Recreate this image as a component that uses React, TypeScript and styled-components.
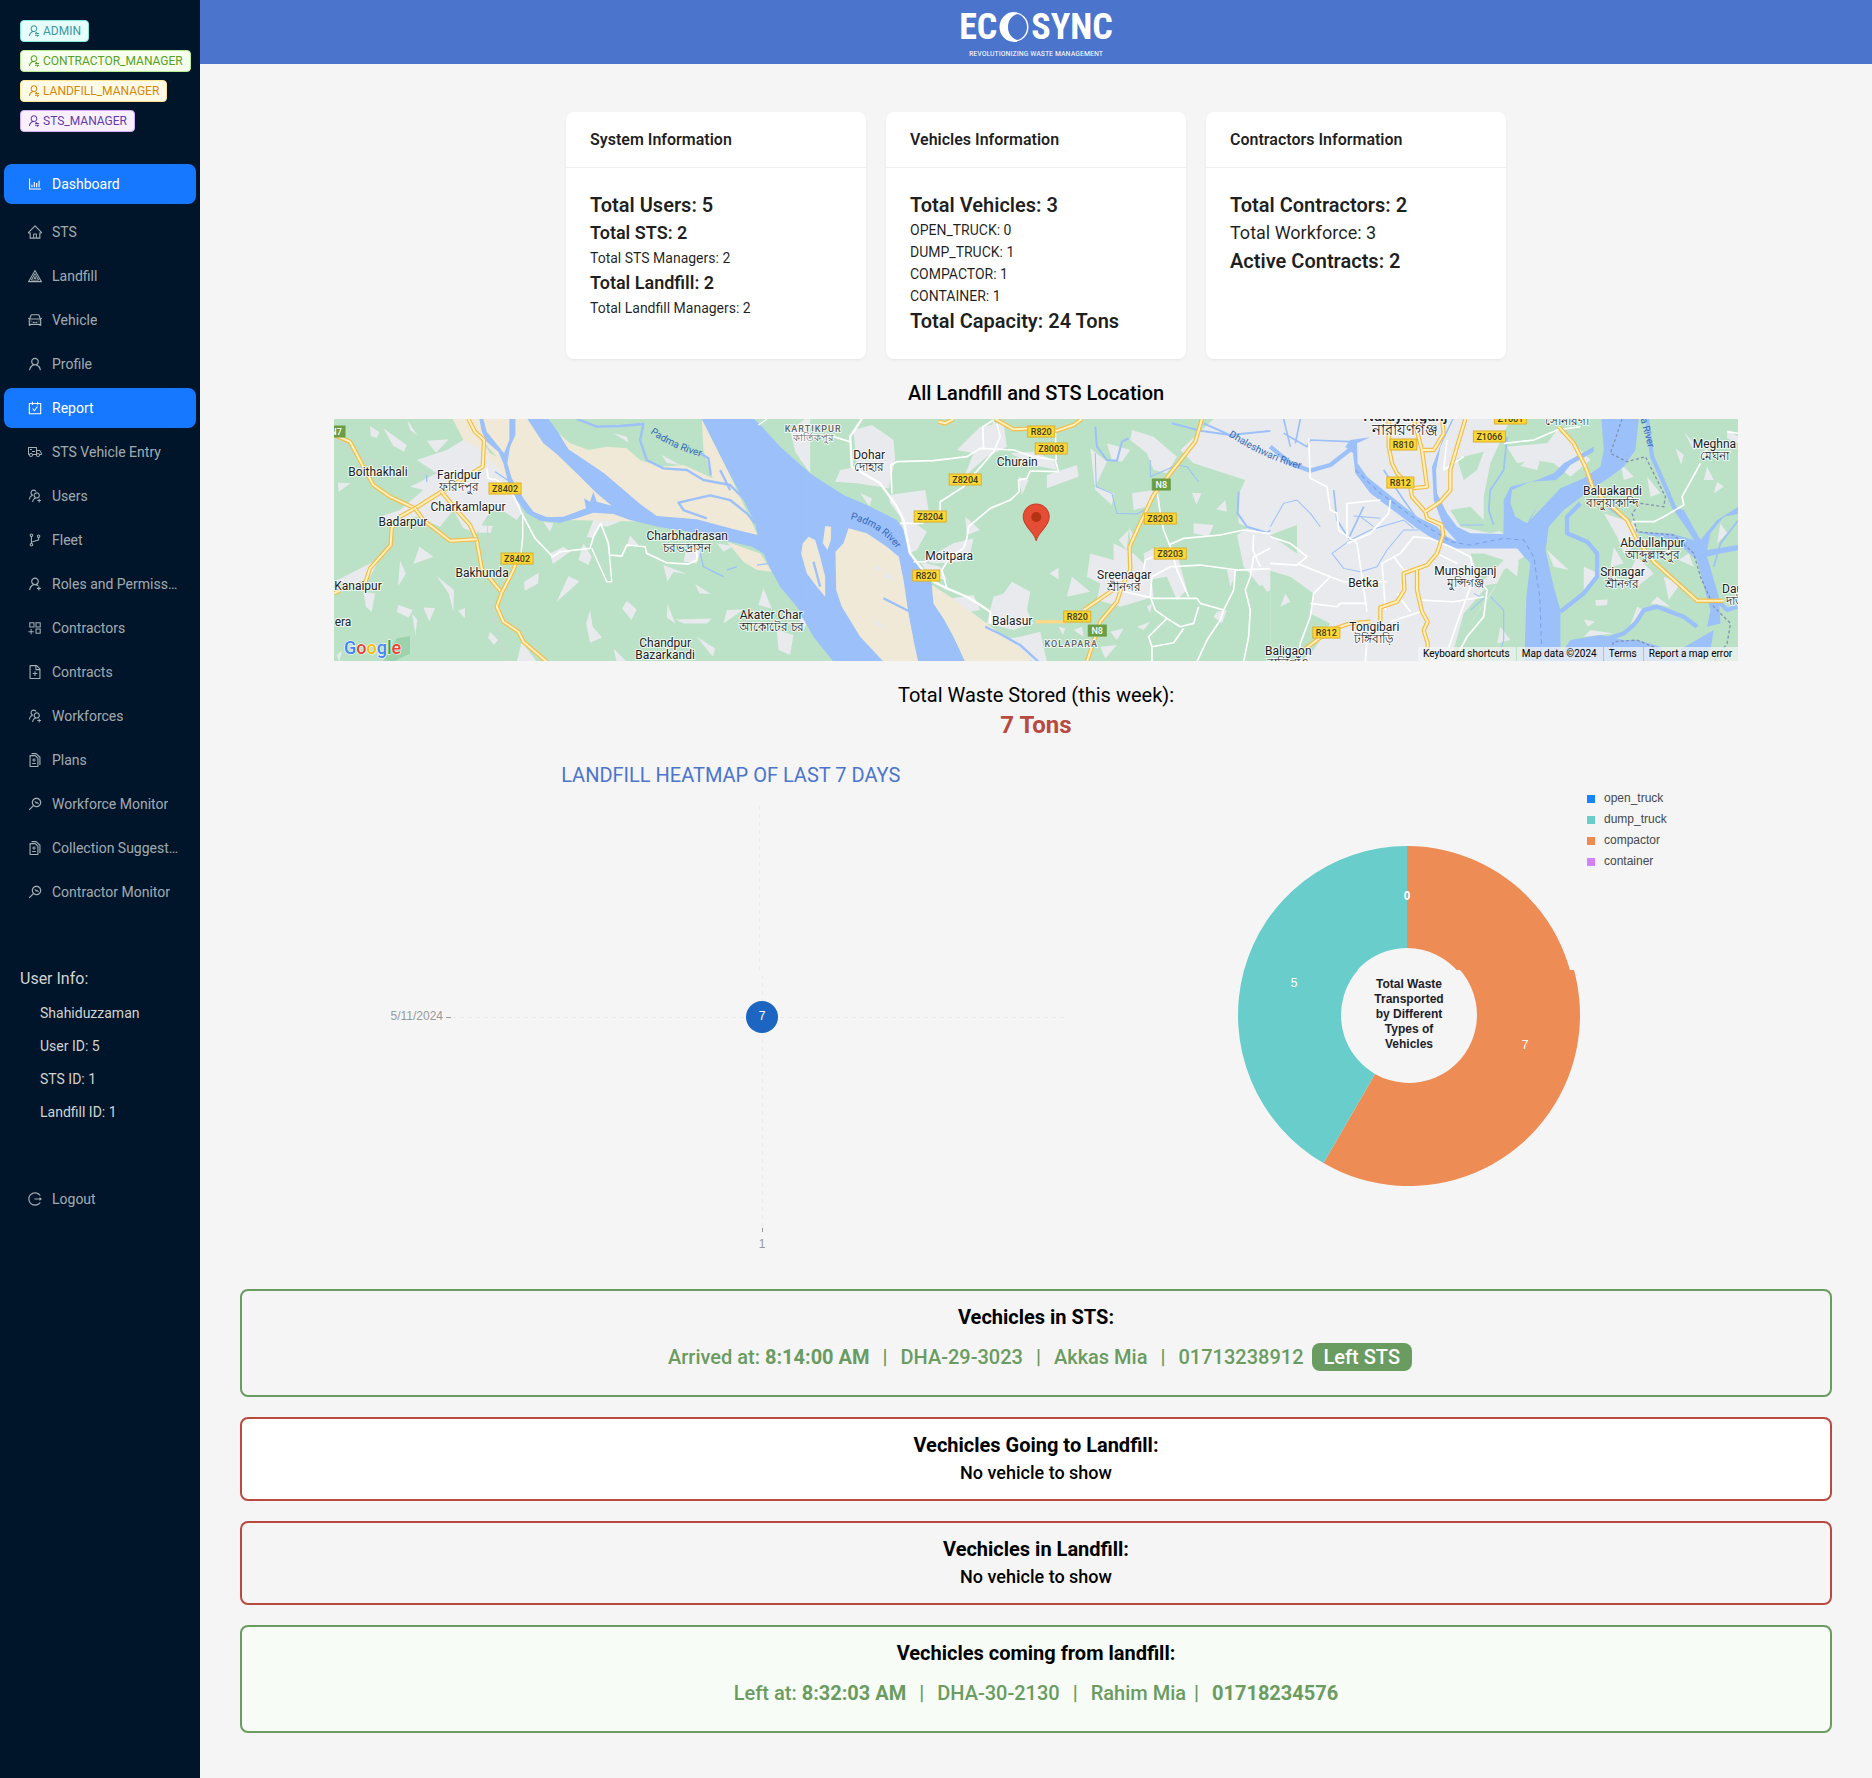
import React from "react";
import styled, { createGlobalStyle } from "styled-components";
import type { IconType } from "react-icons";
import {
  AiOutlineAppstoreAdd,
  AiOutlineBarChart,
  AiOutlineBranches,
  AiOutlineCar,
  AiOutlineCarryOut,
  AiOutlineDiff,
  AiOutlineFileAdd,
  AiOutlineHeatMap,
  AiOutlineHome,
  AiOutlineLogout,
  AiOutlineMonitor,
  AiOutlineTruck,
  AiOutlineUser,
  AiOutlineUserAdd,
  AiOutlineUsergroupAdd,
  AiOutlineUserSwitch,
} from "react-icons/ai";

const GREEN = "#6a9b60";
const RED = "#b84a40";
const BLUE = "#4b74cc";

/* Trims the empty margin around the Ant glyphs. */
const ICON_BOX = "64 64 896 896";

const GlobalStyle = createGlobalStyle`
  *, *::before, *::after { box-sizing: border-box; }
  body {
    margin: 0;
    background: #f5f5f5;
    color: #000;
    font-family: Roboto, "Noto Sans", sans-serif;
    font-size: 14px;
    line-height: 22px;
  }
  h1, h2, h3, p, ul { margin: 0; padding: 0; }
  ul { list-style: none; }
  button { font: inherit; border: 0; cursor: pointer; }
  a { text-decoration: none; }
`;

const Page = styled.div`
  display: flex;
  min-height: 100vh;
`;

/* ---------- Sidebar ---------- */

const Sidebar = styled.aside`
  flex: 0 0 200px;
  min-width: 0;
  background: #001529;
`;

const Tags = styled.ul`
  display: flex;
  flex-direction: column;
  align-items: flex-start;
  gap: 8px;
  padding: 20px 0 32px 20px;
`;

const Tag = styled.li<{ $fg: string; $bg: string; $line: string }>`
  display: flex;
  align-items: center;
  gap: 3px;
  height: 22px;
  padding: 0 7px;
  border: 1px solid ${(p) => p.$line};
  border-radius: 4px;
  background: ${(p) => p.$bg};
  color: ${(p) => p.$fg};
  font-size: 12px;
  line-height: 20px;
  white-space: nowrap;
`;

const Menu = styled.ul`
  display: flex;
  flex-direction: column;
  gap: 4px;
  padding: 0 4px;
  margin-bottom: 8px;
`;

const MenuLink = styled.a<{ $active?: boolean }>`
  display: flex;
  align-items: center;
  gap: 10px;
  width: 100%;
  height: 40px;
  padding: 0 16px 0 24px;
  border-radius: 8px;
  background: ${(p) => (p.$active ? "#1677ff" : "transparent")};
  color: ${(p) => (p.$active ? "#fff" : "rgba(255, 255, 255, 0.65)")};
  svg { flex: none; }
`;

const MenuText = styled.span`
  overflow: hidden;
  text-overflow: ellipsis;
  white-space: nowrap;
`;

const UserInfo = styled.section`
  margin: 55px 0 50px;
  padding-left: 20px;
  color: #d3d3d3;
`;

const UserTitle = styled.h2`
  margin-bottom: 6px;
  font-size: 16px;
  font-weight: 400;
  line-height: 24px;
`;

const UserLine = styled.p`
  padding-left: 20px;
  line-height: 33px;
`;

/* ---------- Main ---------- */

const Content = styled.div`
  flex: 1;
  min-width: 0;
`;

const Header = styled.header`
  display: flex;
  justify-content: center;
  height: 64px;
  background: ${BLUE};
`;

const Logo = styled.div`
  display: flex;
  flex-direction: column;
  align-items: center;
  padding-top: 10px;
  color: #fff;
  font-family: "Roboto Condensed", "Liberation Sans Narrow", Roboto, sans-serif;
`;

const Wordmark = styled.div`
  display: flex;
  align-items: center;
  gap: 2px;
  height: 34px;
  font-size: 36px;
  font-weight: 700;
  line-height: 34px;
`;

const Tagline = styled.div`
  margin-top: 4px;
  font-size: 8px;
  font-weight: 400;
  line-height: 12px;
`;

const Main = styled.main`
  display: flex;
  flex-direction: column;
  gap: 20px;
  padding: 48px 40px 44px;
`;

const Cards = styled.div`
  display: flex;
  flex-wrap: wrap;
  justify-content: center;
  gap: 20px;
`;

const Card = styled.section`
  width: 300px;
  border-radius: 8px;
  background: #fff;
  color: rgba(0, 0, 0, 0.88);
  box-shadow: 0 1px 2px rgba(0, 0, 0, 0.03), 0 1px 6px -1px rgba(0, 0, 0, 0.02),
    0 2px 4px rgba(0, 0, 0, 0.02);
`;

const CardTitle = styled.h2`
  height: 56px;
  margin-bottom: -1px;
  padding: 0 24px;
  border-bottom: 1px solid #f0f0f0;
  font-size: 16px;
  font-weight: 600;
  line-height: 55px;
`;

const CardBody = styled.div`
  padding: 24px;
`;

const Stat = styled.p<{ $size: "lg" | "md" | "sm"; $strong?: boolean }>`
  font-size: ${(p) => ({ lg: 20, md: 18, sm: 14 })[p.$size]}px;
  line-height: ${(p) => (p.$size === "sm" ? 22 : 28)}px;
  font-weight: ${(p) => (p.$strong ? 600 : 400)};
`;

const MapSection = styled.section`
  display: flex;
  flex-direction: column;
  align-items: center;
  gap: 12px;
  margin: 0 -40px;
`;

const SectionTitle = styled.h2`
  font-size: 20px;
  font-weight: 500;
  line-height: 28px;
`;

const MapFrame = styled.div`
  position: relative;
  width: 84%;
  height: 242px;
  overflow: hidden;
  background: #bbe2c6;
`;

const MapSvg = styled.svg`
  display: block;
  width: 100%;
  height: 100%;
`;

const MapFooter = styled.div`
  position: absolute;
  right: 0;
  bottom: 0;
  display: flex;
  gap: 1px;
  color: #000;
  font-size: 10px;
  line-height: 14px;
`;

const MapNote = styled.span`
  padding: 0 6px 0 5px;
  background: rgba(245, 245, 245, 0.7);
  color: #000;
`;

const Stored = styled.section`
  text-align: center;
`;

const StoredLabel = styled.p`
  font-size: 20px;
  line-height: 28px;
`;

const StoredValue = styled.p`
  color: ${RED};
  font-size: 24px;
  font-weight: 700;
  line-height: 32px;
`;

const Charts = styled.div`
  display: grid;
  grid-template-columns: 13fr 10fr;
  width: calc(84% + 67px);
  margin: 0 auto;
  min-height: 508px;
`;

const ChartColumn = styled.section`
  display: flex;
  flex-direction: column;
  align-items: center;
  min-width: 0;
`;

const ChartTitle = styled.h2`
  color: ${BLUE};
  font-size: 20px;
  font-weight: 400;
  line-height: 28px;
`;

const ChartSvg = styled.svg`
  display: block;
  overflow: visible;
  font-family: "Liberation Sans", sans-serif;
  font-size: 12px;
`;

const Panel = styled.section<{ $tone: string; $bg: string }>`
  padding: 12px;
  border: 2px solid ${(p) => p.$tone};
  border-radius: 8px;
  background: ${(p) => p.$bg};
  text-align: center;
`;

const PanelTitle = styled.h2`
  font-size: 20px;
  font-weight: 700;
  line-height: 28px;
`;

const Empty = styled.p`
  font-size: 18px;
  font-weight: 500;
  line-height: 28px;
`;

const Trip = styled.div<{ $action?: boolean }>`
  display: flex;
  justify-content: center;
  margin: 12px 0;
  padding-left: ${(p) => (p.$action ? 8 : 0)}px;
  color: ${GREEN};
  font-size: 20px;
  font-weight: 500;
  line-height: 28px;
  strong { font-weight: 700; }
`;

const Bar = styled.span<{ $tight?: boolean }>`
  margin: 0 13px 0 ${(p) => (p.$tight ? 8 : 13)}px;
`;

const LeftButton = styled.button`
  height: 28px;
  margin-left: 8px;
  padding: 0 12px;
  border-radius: 8px;
  background: ${GREEN};
  color: #fff;
  line-height: 28px;
`;

/* ---------- Data ---------- */

const roles = [
  { name: "ADMIN", fg: "#4096a0", bg: "#e6fffb", line: "#87e8de" },
  { name: "CONTRACTOR_MANAGER", fg: "#56a026", bg: "#f6ffed", line: "#b7eb8f" },
  { name: "LANDFILL_MANAGER", fg: "#d48806", bg: "#fffbe6", line: "#ffe58f" },
  { name: "STS_MANAGER", fg: "#5f3dab", bg: "#f9f0ff", line: "#d3adf7" },
];

const links: { label: string; icon: IconType; active?: boolean }[] = [
  { label: "STS", icon: AiOutlineHome },
  { label: "Landfill", icon: AiOutlineHeatMap },
  { label: "Vehicle", icon: AiOutlineCar },
  { label: "Profile", icon: AiOutlineUser },
  { label: "Report", icon: AiOutlineCarryOut, active: true },
  { label: "STS Vehicle Entry", icon: AiOutlineTruck },
  { label: "Users", icon: AiOutlineUsergroupAdd },
  { label: "Fleet", icon: AiOutlineBranches },
  { label: "Roles and Permissions", icon: AiOutlineUserAdd },
  { label: "Contractors", icon: AiOutlineAppstoreAdd },
  { label: "Contracts", icon: AiOutlineFileAdd },
  { label: "Workforces", icon: AiOutlineUsergroupAdd },
  { label: "Plans", icon: AiOutlineDiff },
  { label: "Workforce Monitor", icon: AiOutlineMonitor },
  { label: "Collection Suggestions", icon: AiOutlineDiff },
  { label: "Contractor Monitor", icon: AiOutlineMonitor },
];

/* ---------- Map ---------- */

const LAND = "#bbe2c6";
const TOWN = "#e8eaed";
const SAND = "#f0e9d7";
const WATER = "#9cc0f9";

function Highway({ d }: { d: string }) {
  return (
    <>
      <path d={d} fill="none" stroke="#f3bd47" strokeWidth="13" strokeLinejoin="round" />
      <path d={d} fill="none" stroke="#fff0c0" strokeWidth="6" strokeLinejoin="round" />
    </>
  );
}

function Street({ d, w = 5 }: { d: string; w?: number }) {
  return <path d={d} fill="none" stroke="#fff" strokeWidth={w} strokeLinejoin="round" />;
}

function Stream({ d, w = 5 }: { d: string; w?: number }) {
  return <path d={d} fill="none" stroke={WATER} strokeWidth={w} strokeLinejoin="round" />;
}

function WestMap() {
  return (
    <g transform="translate(-4 -9) scale(0.33333)">
      <path
        fill={TOWN}
        d="M440 65L470 110 500 165 535 210 560 250 575 310 560 330 500 290 470 320 440 370 400 355 370 300 330 350 260 320 190 340 150 320 210 300 280 240 240 230 280 210 320 190 260 150 350 120 400 90ZM120 48L148 66 140 84 122 78ZM160 55L230 105 222 125 190 108ZM232 30L262 76 240 60ZM290 92L356 88 318 128ZM24 218L62 220 26 245ZM12 515L105 468 150 445 120 500 75 520ZM100 545L135 550 125 606 108 590ZM210 452L228 490 204 528ZM320 498L372 540 370 605 356 550ZM268 410L310 440 250 462ZM205 585L248 600 236 622 200 606ZM280 592L315 594 298 634ZM384 602L405 594 404 624ZM246 610L262 630 256 675ZM442 345L488 348 482 368 446 368ZM480 665L504 690 492 704 474 684ZM582 515L626 488 624 520 584 542ZM715 498L748 514 680 575ZM575 695L620 755 560 755ZM660 430L700 410 720 425 668 462ZM640 335L670 340 660 365ZM800 305L850 318 870 335 830 350 810 345 790 385 770 380ZM760 400L785 440 775 465 745 450ZM780 600L788 650 816 682 780 698 768 640ZM890 572L920 598 904 630 876 595ZM900 376L925 405 890 410ZM1000 465L1070 492 1030 486 1012 515ZM1012 582L1036 640 1010 622ZM1035 628L1145 625 1130 640 1062 640ZM1095 522L1142 552 1108 550ZM1300 535L1325 595 1285 585ZM1190 600L1240 598 1180 640ZM1100 680L1155 715 1148 740ZM1070 410L1110 425 1100 460 1060 455ZM1380 60L1425 27 1440 27V190L1395 125ZM1340 660L1390 675 1380 735 1345 720ZM1160 400L1210 408 1180 425ZM850 715L890 755H860ZM20 735L36 722 28 755Z"
      />
      <path
        fill={SAND}
        d="M368 27H1115L1195 185 1282 375 1200 360 980 335 700 330 600 310 560 240 500 170 440 110 400 90ZM1190 395L1290 430 1325 485 1280 480 1240 455ZM1440 380L1412 420 1415 465 1440 485Z"
      />
      <path fill={LAND} d="M656 27H1115L1120 120 1148 205 1060 165 990 170 930 150 890 115 830 110 775 120 720 100 680 65ZM1150 27L1170 50 1140 48ZM455 90L500 140 480 130Z" />
      <path fill={TOWN} d="M850 70L890 80 896 98ZM995 135L1050 165 1010 158Z" />
      <path
        fill={WATER}
        d="M1115 27H1272L1300 55 1350 110 1395 150 1440 190V645L1400 590 1350 530 1320 475 1300 430 1265 410 1200 395 1140 378 1060 362 990 352 900 330 850 312 790 308 740 325 690 338 630 332 590 310 560 270 535 220 520 160 505 125 470 95 455 65 448 27H460L470 65 490 90 522 130 538 90V27H556V75L540 110 532 160 545 205 580 265 610 305 650 322 700 320 768 295 762 265 780 275 790 245 800 275 845 287 800 250 745 195 680 132 640 100 620 70 592 27H656L685 68 715 118 760 148 820 188 875 235 930 282 980 318 1100 328 1200 355 1282 375 1275 340 1240 270 1195 185Z"
      />
      <path fill={SAND} d="M1440 380L1412 420 1415 465 1440 485Z" />
      <Stream w={7} d="M740 27L800 50 870 48 940 42 930 90 950 150 1000 175 1070 180 1120 210 1200 225 1275 300M1110 130L1135 145 1142 195M1275 340L1250 310 1200 270 1140 256 1045 278 1060 300 1130 325M1200 240L1170 180" />
      <Stream w={4} d="M495 185L540 215M290 195V215M1110 430L1120 470 1180 500M1190 480L1220 470M1280 465L1320 460" />
      <g fill="none" stroke="#cfd4d3" strokeWidth="3">
        <path d="M20 85L80 135 130 155 160 190 400 190M470 320L480 480 478 560 500 660 530 755" />
      </g>
      <Street d="M470 175L475 205 500 210 545 245 575 310 615 385 668 440 690 425 780 415 790 380 812 340 835 400 838 435 875 438 890 405 945 410 950 430 1010 458 1075 462 1100 450V420" />
      <Street d="M785 415L830 515 845 515 838 435M578 310V380L572 440M1285 45L1310 27" w={4} />
      <Highway d="M12 75L60 95 100 170 130 225 180 260 255 295 335 245 400 205 458 170 462 90 435 65 415 27" />
      <Highway d="M335 245L375 295 420 345 440 390 455 475 515 548 500 590 520 635 565 665 580 695 650 755" />
      <Highway d="M255 295L210 320 185 355 182 405 120 475 105 520" />
      <Highway d="M255 295L280 330 360 392 440 388M515 548L550 480 560 450M12 550L30 542" />
      <path fill="#9dd3ac" d="M200 685L240 678V730L190 755H160Z" />
    </g>
  );
}

function CentreMap() {
  return (
    <g transform="translate(466 -9) scale(0.33333)">
      <path
        fill={TOWN}
        d="M0 90L25 130 20 165 0 150ZM160 60L215 45 280 90 285 150 265 235 170 220 105 215 120 180 170 170ZM265 255L375 240 385 300 355 300 345 340 380 365 350 420 325 430 300 320 270 280ZM180 250L215 265 208 290ZM495 320L540 360 500 375ZM540 50L610 40 620 110 560 140 520 175 490 205 520 130 470 120ZM655 200L685 210 665 255ZM630 130L700 125 760 150 770 180 700 165ZM740 195L830 165 835 200 740 235ZM580 30L600 60 570 65ZM460 400L520 385 510 430 480 455 400 460 370 450ZM360 455L420 470 440 510 390 500ZM450 565L520 555 540 600 480 610ZM635 515L690 545 680 600 700 640 640 660 560 640 580 560 610 550ZM660 680L720 665 740 755H700L600 690ZM748 490L775 472V508ZM815 500L870 545 800 560ZM940 400L1000 430 1050 480 1060 560 960 590 890 570 900 520 860 500 870 430 940 450ZM955 390L985 360 980 420ZM985 350L1005 385 990 390ZM870 115L920 155 885 230 940 250 935 285 885 240ZM920 100L990 120 965 155 935 150ZM995 60L1060 80 1130 140 1100 190 1060 180 1040 130 990 90ZM995 250L1060 240 1040 290 1000 300ZM1175 248L1204 250 1188 284ZM1275 270L1280 305 1248 298ZM1180 340L1240 345 1225 380 1180 370ZM1240 27H1440V370L1380 370 1315 340 1312 260 1335 210 1180 160 1140 120ZM1310 375L1340 355 1440 380V450L1380 530 1330 470ZM1030 430L1070 410 1130 430 1160 540 1130 570 1100 500 1040 510ZM1250 605L1280 600 1265 640 1240 620ZM1370 500L1440 490V530L1400 545ZM1280 480L1310 480 1290 530ZM900 710L950 705 915 745ZM930 665L970 655 950 690ZM775 650L795 655 788 675ZM820 660L845 650 850 680ZM1040 590L1055 580 1050 610ZM1010 650L1050 635 1030 660Z"
      />
      <path fill={TOWN} d="M0 600L20 640 10 660 0 655Z" />
      <path
        fill={WATER}
        d="M0 170L60 210 130 255 200 285 290 330 310 360 325 430 360 470 395 520 400 580 430 625 460 680 495 755H100L40 680 0 610Z"
      />
      <path
        fill={SAND}
        d="M145 355L200 370 260 410 296 440 310 510 325 610 340 690 354 755H250L180 680 125 590 108 540 106 425 130 400ZM75 348L93 350 92 390 82 420 68 400ZM25 380L45 390 60 440 75 500V560L50 530 20 490 3 430 8 400ZM395 525L450 560 540 625 600 670 690 740V755H495L460 680 430 625 400 580Z"
      />
      <path fill={TOWN} d="M222 464L246 474 230 486ZM260 484L285 512 250 502ZM214 626L270 660 230 645Z" />
      <Stream w={7} d="M40 455L60 530M250 565L290 585 325 603M555 650L600 672 660 705 715 755" />
      <Stream w={6} d="M885 50L890 110 920 150 950 152 965 95 985 85M1115 40L1200 62 1290 75 1440 60M1210 40L1300 80M1315 245L1312 310 1340 350 1400 368 1440 340" />
      <Stream w={3} d="M885 130L888 230 935 250 950 310 1010 312 1050 290M1050 150V200L1130 165 1160 170 1195 215" />
      <Street d="M185 27L150 80 155 170 240 220 290 290 310 330 330 430 360 470 400 515 440 535 500 560 540 585 570 605V640" w={7} />
      <Street d="M275 250L272 165 290 155 400 152 500 140 540 115 640 120 700 140 765 150 775 185 690 183 680 205 655 210 657 245 630 270 570 295 505 350 500 385 490 415 450 440 425 480 440 535M100 80L150 95M550 115L548 50 580 30M590 40L600 80 580 125 550 160 490 230 420 275V310M300 340H370M340 455H380M765 60L768 150" />
      <Street d="M1070 240L1080 310 1090 360 1110 410 1130 480 1165 560M1105 405L1150 385 1260 375 1330 360 1440 375M1030 480L1035 450 1110 420M950 540L1060 565 1190 565 1200 580 1270 600 1260 630 1220 690 1190 755M1055 500L1110 470 1200 465 1310 480 1440 475M1055 500L1050 560 1065 600 1100 625 1140 650 1180 640 1195 590M1100 625L1045 680 1055 710 1120 698 1150 655M1055 710V755M1305 480L1300 540 1270 600M1440 400L1360 440 1350 500 1335 540 1350 600 1345 680 1330 755M1360 375L1358 420 1380 470" />
      <Highway d="M585 27L640 58 700 55 770 62 820 45 845 27M415 35L435 40 460 27" />
      <Highway d="M1205 27L1185 95 1110 190 1060 255 1015 350 988 410 990 480 965 530 950 575 900 635 860 755" />
      <Highway d="M960 525L850 600" />
      <path d="M705 635H800" stroke="#fbd98a" strokeWidth="10" />
    </g>
  );
}

function EastMap() {
  return (
    <g transform="translate(936 -9) scale(0.33333)">
      <path
        fill={TOWN}
        d="M0 27H720L660 160 640 260 640 330 740 400 760 440 700 480 670 540 600 640 540 755H0Z"
      />
      <path
        fill={LAND}
        d="M0 375L80 345V430ZM0 482L60 500 130 550 120 610 180 640 130 720 90 755H0ZM540 300L600 290 640 330 700 360 660 370 570 350ZM640 430L700 450 620 530 680 520 600 640 560 755H540L580 610 640 540 600 430ZM560 145L640 125 620 180 580 210Z"
      />
      <path
        fill={TOWN}
        d="M710 110L830 100 860 60 900 90 960 150 900 200 850 160 790 150 740 160ZM780 138L808 155 800 180 750 168ZM735 255L800 250 760 300ZM715 405L745 455 740 500 705 470ZM830 420L895 480 850 470ZM1050 160L1090 200 1060 210ZM1130 200L1170 250 1140 260ZM1215 115L1240 135 1232 165ZM1240 65L1280 110 1270 120ZM1310 170L1330 210 1300 210ZM1340 215L1360 230 1330 250ZM1000 310L1090 340 1110 400 1060 430 1040 380ZM1100 440L1150 490 1100 530 1070 500ZM1180 500L1230 520 1195 570ZM1350 340L1370 370 1340 400ZM975 570L1012 568 1010 585 976 588ZM940 628L975 634 952 650ZM1100 590L1120 600 1080 645ZM690 650L720 690 680 700ZM1030 410L1060 460 1020 470ZM1160 560L1200 590 1140 580ZM940 470L985 490 940 540ZM1255 430L1270 470 1225 450ZM960 660L1030 670 940 680ZM920 230L960 250 900 262ZM1370 60L1404 80V100L1370 85ZM200 700L215 720 200 740ZM45 550L60 575 30 590ZM1290 140L1310 110 1315 140Z"
      />
      <path
        fill={WATER}
        d="M993 27H1105L1095 120 1060 170 1020 200 960 240 880 300 835 350 825 420 850 530 870 600 870 755H762L768 560 780 460 740 415 640 415 560 415 500 395 440 355 380 310 300 250 255 190 248 130 225 110 240 90 300 82 260 100 262 160 290 200 370 265 440 320 500 350 530 380 560 395 520 350 490 270 485 170 520 80 545 27H530L550 27 510 110 497 180 500 250 530 310 560 350 600 370 700 372V270L720 230 800 210 850 190 880 160 970 110V125L900 165 880 190 850 215 800 290 780 330 870 235 940 205 990 170 1000 120Z"
      />
      <path fill={LAND} d="M780 215L860 210 800 290 770 340 735 320 720 280 725 240ZM560 320L690 345 600 340Z" />
      <path
        fill={WATER}
        d="M700 330L760 350 830 320 830 400 700 400ZM855 755L900 690 990 675 1060 690 1100 690 1170 710 1190 740 1260 700 1330 660 1320 720 1250 755ZM1404 290L1340 330 1290 390 1240 300 1210 290 1240 340 1270 390 1200 370 1090 365 1210 390 1280 450 1300 530 1320 600 1310 650 1350 640 1345 560 1310 440 1350 430 1404 420V405L1310 420 1320 370 1360 320 1404 312Z"
      />
      <Stream w={13} d="M0 110L60 160 120 182 180 165 250 110M1130 27L1145 140 1185 230 1210 290 1290 400M870 605L940 550 980 500V430L950 395 890 370V320L930 280M1095 640L1120 600 1160 590 1240 620 1280 650M1095 640L1060 670 1000 690M1330 560L1370 600 1400 590" />
      <Stream w={5} d="M40 70L110 110 120 90 240 95M40 27L60 110M90 27L75 100M190 240L200 330 235 385 280 290M710 80L700 180 660 240 655 300 670 345M1404 330L1350 400 1330 470M340 180L400 270 450 340M1010 290L1050 320 1080 330" />
      <Stream w={3} d="M0 350L40 280 80 270 120 310 150 350M445 360L400 360 350 420 320 470 270 485 220 475 185 430 240 390 300 360 400 330 430 355M250 318L330 325M270 320L310 350M640 345L570 345M660 560L700 600V690L680 755M610 550L640 565 600 600" />
      <path
        d="M255 180L330 250 440 330 540 395 600 405 700 385 760 390 790 440 808 560 815 755"
        fill="none"
        stroke="#79a2e6"
        strokeWidth="3"
        strokeDasharray="14 10"
      />
      <path
        d="M1055 27L1020 130 1070 155 1125 140 1185 260 1180 290 1110 280 1085 310 1100 365 1210 375 1270 430 1290 500 1330 590 1380 640 1370 700 1330 755M1020 720L1030 695 1100 690 1160 715"
        fill="none"
        stroke="#8193b0"
        strokeWidth="4"
        strokeDasharray="9 7"
      />
      <Street d="M115 85L120 205 170 230 180 300 200 310 205 360 260 400 275 500 290 605M230 385V280L330 270M230 400L300 370 355 310 360 270M0 380L60 400 110 440 80 465 0 460M80 460L180 500 220 515 350 515M180 500L130 550 120 620 90 700 85 755M120 580L200 590 210 580 290 580M345 600L335 460 390 430 430 380 480 385 540 410 600 440 610 490 650 540 640 620 590 680 550 755M370 440L400 480H440M455 570L550 575 640 560M360 635L450 605M380 550L420 605M500 430L560 460M600 530L560 640 520 755M290 690L285 755M580 140L520 180 530 90M700 100L790 90 860 60 930 50M1290 160L1235 260 1240 285 1180 320 1150 335 1085 335M1404 70L1370 65" />
      <Highway d="M355 27V110L365 160 380 190 420 230 425 260 465 305 470 325 515 345 518 375 500 430 470 465 400 490 402 540 380 575 330 592 330 635" />
      <Highway d="M585 27L560 110 540 180 540 240 510 275 465 305M430 27L455 120 490 120 520 70 515 27M455 120L470 230 425 235" />
      <Highway d="M440 480V540L455 605 472 635 460 660 472 700V755M300 635L240 640 180 660 100 720" />
      <Highway d="M865 50L910 100 945 170 970 240 1070 330 1100 390 1150 455 1280 572H1360M1050 740L1070 735" />
    </g>
  );
}

type Label = [x: number, y: number, text: string, bn?: string];

const places: Label[] = [
  [44, 57, "Boithakhali"],
  [125, 60, "Faridpur", "ফরিদপুর"],
  [134, 92, "Charkamlapur"],
  [69, 107, "Badarpur"],
  [148, 158, "Bakhunda"],
  [24, 171, "Kanaipur"],
  [9, 207, "era"],
  [353, 121, "Charbhadrasan", "চরভদ্রাসন"],
  [437, 200, "Akater Char", "আকোটের চর"],
  [331, 228, "Chandpur"],
  [331, 240, "Bazarkandi"],
  [535, 40, "Dohar", "দোহার"],
  [683, 47, "Churain"],
  [615, 141, "Moitpara"],
  [678, 206, "Balasur"],
  [790, 160, "Sreenagar", "শ্রীনগর"],
  [954, 236, "Baligaon", "বালিগাঁও"],
  [1029, 168, "Betka"],
  [1131, 156, "Munshiganj", "মুন্সিগঞ্জ"],
  [1040, 212, "Tongibari", "টঙ্গিবাড়ি"],
  [1278, 76, "Baluakandi", "বালুয়াকান্দি"],
  [1318, 128, "Abdullahpur", "আব্দুল্লাহপুর"],
  [1288, 157, "Srinagar", "শ্রীনগর"],
  [1380, 29, "Meghna", "মেঘনা"],
  [1416, 174, "Daudkandi", "দাউদকান্দি"],
];

const shields: [x: number, y: number, text: string, green?: boolean][] = [
  [2, 13, "N7", true],
  [171, 70, "Z8402"],
  [183, 140, "Z8402"],
  [707, 13, "R820"],
  [717, 30, "Z8003"],
  [631, 61, "Z8204"],
  [596, 98, "Z8204"],
  [592, 157, "R820"],
  [743, 198, "R820"],
  [827, 66, "N8", true],
  [763, 212, "N8", true],
  [826, 100, "Z8203"],
  [836, 135, "Z8203"],
  [1069, 26, "R810"],
  [1066, 64, "R812"],
  [992, 214, "R812"],
  [1155, 18, "Z1066"],
  [1176, 0, "Z1061"],
];

const Place = styled.text`
  fill: #202124;
  stroke: #fff;
  stroke-width: 2px;
  stroke-opacity: 0.8;
  stroke-linejoin: round;
  paint-order: stroke;
  font-size: 12px;
  text-anchor: middle;
`;

const City = styled(Place)`
  font-size: 15px;
  font-weight: 500;
`;

const Area = styled(Place)`
  fill: #5f6368;
  font-size: 9px;
  font-weight: 500;
  letter-spacing: 1px;
`;

const AreaLocal = styled(Place)`
  fill: #5f6368;
  font-size: 10px;
`;

const RiverName = styled.text`
  fill: #3569b8;
  font-size: 10px;
`;

const ShieldText = styled.text<{ $light?: boolean }>`
  fill: ${(p) => (p.$light ? "#fff" : "#3c3a20")};
  font-size: 9px;
  font-weight: 500;
  text-anchor: middle;
`;

const GoogleMark = styled.text`
  font-size: 18px;
  font-weight: 500;
  stroke: #fff;
  stroke-width: 1px;
  paint-order: stroke;
`;

function LocationMap() {
  return (
    <MapSvg viewBox="0 0 1404 242" preserveAspectRatio="xMidYMin slice" role="img" aria-label="Map of landfill and STS locations">
      <rect width="1404" height="243" fill={LAND} />
      <WestMap />
      <CentreMap />
      <EastMap />
      <defs>
        <path id="padma-west" d="M316 14Q338 30 368 38" />
        <path id="padma-centre" d="M516 100Q548 108 564 132" />
        <path id="dhaleshwari" d="M894 17Q930 40 966 50" />
        <path id="meghna" d="M1306 0L1314 30" />
      </defs>
      <RiverName><textPath href="#padma-west">Padma River</textPath></RiverName>
      <RiverName><textPath href="#padma-centre">Padma River</textPath></RiverName>
      <RiverName><textPath href="#dhaleshwari">Dhaleshwari River</textPath></RiverName>
      <RiverName><textPath href="#meghna">a River</textPath></RiverName>
      {shields.map(([x, y, text, green], i) => {
        const w = text.length === 5 ? 32 : text.length === 4 ? 27 : 18;
        return (
          <g key={i}>
            <rect
              x={x - w / 2}
              y={y - 6}
              width={w}
              height="11"
              fill={green ? "#6b9d45" : "#fdd835"}
              stroke={green ? "#6b9d45" : "#dcae2c"}
            />
            <ShieldText x={x} y={y + 3} $light={green}>{text}</ShieldText>
          </g>
        );
      })}
      {places.map(([x, y, text, bn], i) => (
        <g key={i}>
          <Place x={x} y={y}>{text}</Place>
          {bn && <Place x={x} y={y + 12}>{bn}</Place>}
        </g>
      ))}
      <City x="1071" y="2">Narayanganj</City>
      <City x="1071" y="16">নারায়ণগঞ্জ</City>
      <Place x="1233" y="6">সোনারগাঁ</Place>
      <Area x="479" y="13">KARTIKPUR</Area>
      <AreaLocal x="479" y="22">কার্তিকপুর</AreaLocal>
      <Area x="737" y="228">KOLAPARA</Area>
      <path
        d="M702 122C701 113 689 108 689 98A13 13 0 0 1 715 98C715 108 703 113 702 122Z"
        fill="#e54d35"
        stroke="#c43e2a"
      />
      <circle cx="702" cy="98" r="5" fill="#b23414" />
      <GoogleMark x="10" y="235">
        <tspan fill="#4285f4">G</tspan>
        <tspan fill="#ea4335">o</tspan>
        <tspan fill="#fbbc04">o</tspan>
        <tspan fill="#4285f4">g</tspan>
        <tspan fill="#34a853">l</tspan>
        <tspan fill="#ea4335">e</tspan>
      </GoogleMark>
    </MapSvg>
  );
}

/* ---------- Charts ---------- */

function Heatmap() {
  return (
    <ChartSvg width="794" height="480" role="img" aria-label="Landfill heatmap">
      <g stroke="#ebebeb" strokeDasharray="4 4" shapeRendering="crispEdges">
        <path d="M118 228H735" />
        <path d="M425 17V182M428 186V439" />
      </g>
      <path d="M112 228H117M428 439V443" stroke="#999" shapeRendering="crispEdges" />
      <g fill="#999">
        <text x="109" y="231" textAnchor="end">5/11/2024</text>
        <text x="428" y="459" textAnchor="middle">1</text>
      </g>
      <circle cx="428" cy="228" r="16" fill="#1c66c1" />
      <text x="428" y="231" textAnchor="middle" fill="#fff">7</text>
    </ChartSvg>
  );
}

function slice(cx: number, cy: number, outer: number, inner: number, from: number, to: number) {
  const at = (r: number, turn: number) => {
    const a = turn * 2 * Math.PI - Math.PI / 2;
    return `${cx + r * Math.cos(a)} ${cy + r * Math.sin(a)}`;
  };
  const large = to - from > 0.5 ? 1 : 0;
  return `M${at(outer, from)}A${outer} ${outer} 0 ${large} 1 ${at(outer, to)}L${at(inner, to)}A${inner} ${inner} 0 ${large} 0 ${at(inner, from)}Z`;
}

const legend = [
  ["open_truck", "#1783ff"],
  ["dump_truck", "#69cdcc"],
  ["compactor", "#ee8a50"],
  ["container", "#d580ff"],
];

const donutTitle = ["Total Waste", "Transported", "by Different", "Types of", "Vehicles"];

function Donut() {
  const split = 7 / 12;
  return (
    <ChartSvg width="610" height="480" role="img" aria-label="Waste transported by vehicle type">
      <clipPath id="donut-top"><rect width="610" height="209" /></clipPath>
      <clipPath id="donut-bottom"><rect y="209" width="610" height="271" /></clipPath>
      <g clipPath="url(#donut-top)">
        <path d={slice(279, 254, 169, 67, 0, split)} fill="#ee8c55" />
        <path d={slice(279, 254, 169, 67, split, 1)} fill="#69cdcc" />
      </g>
      <g clipPath="url(#donut-bottom)">
        <path d={slice(281, 254, 171, 68, 0, split)} fill="#ee8c55" />
        <path d={slice(281, 254, 171, 68, split, 1)} fill="#69cdcc" />
      </g>
      <g fill="#fff" textAnchor="middle">
        <text x="166" y="226">5</text>
        <text x="397" y="288">7</text>
        <text x="279" y="139" fontWeight="700">0</text>
      </g>
      <g fill="#1d2129" fontWeight="700" textAnchor="middle">
        {donutTitle.map((line, i) => (
          <text key={line} x="281" y={227 + i * 15}>{line}</text>
        ))}
      </g>
      {legend.map(([name, color], i) => (
        <g key={name}>
          <rect x="459" y={34 + i * 21} width="8" height="8" fill={color} />
          <text x="476" y={41 + i * 21} fill="#44484f">{name}</text>
        </g>
      ))}
    </ChartSvg>
  );
}

/* ---------- Page ---------- */

function MenuItem({ label, icon: Icon, active }: { label: string; icon: IconType; active?: boolean }) {
  return (
    <li>
      <MenuLink href="#" $active={active}>
        <Icon size={14} viewBox={ICON_BOX} />
        <MenuText>{label}</MenuText>
      </MenuLink>
    </li>
  );
}

export default function App() {
  return (
    <Page>
      <GlobalStyle />
      <Sidebar>
        <Tags>
          {roles.map((r) => (
            <Tag key={r.name} $fg={r.fg} $bg={r.bg} $line={r.line}>
              <AiOutlineUserSwitch size={12} viewBox={ICON_BOX} />
              {r.name}
            </Tag>
          ))}
        </Tags>
        <nav>
          <Menu>
            <MenuItem label="Dashboard" icon={AiOutlineBarChart} active />
          </Menu>
          <Menu>
            {links.map((l) => (
              <MenuItem key={l.label} {...l} />
            ))}
          </Menu>
        </nav>
        <UserInfo>
          <UserTitle>User Info:</UserTitle>
          <UserLine>Shahiduzzaman</UserLine>
          <UserLine>User ID: 5</UserLine>
          <UserLine>STS ID: 1</UserLine>
          <UserLine>Landfill ID: 1</UserLine>
        </UserInfo>
        <Menu>
          <li>
            <MenuLink as="button" type="button">
              <AiOutlineLogout size={14} viewBox={ICON_BOX} />
              <MenuText>Logout</MenuText>
            </MenuLink>
          </li>
        </Menu>
      </Sidebar>

      <Content>
        <Header>
          <Logo>
            <Wordmark>
              <span>EC</span>
              <svg width="30" height="32" viewBox="0 0 30 32" aria-label="O" role="img">
                <path
                  fill="#fff"
                  fillRule="evenodd"
                  d="M15 1A14.500 15 0 1 1 15 31A14.500 15 0 1 1 15 1ZM18 3C12 5 9 10 9 16C9 22 12 27 18 29C24 28 28 22 28 16C28 10 24 4 18 3Z"
                />
              </svg>
              <span>SYNC</span>
            </Wordmark>
            <Tagline>REVOLUTIONIZING WASTE MANAGEMENT</Tagline>
          </Logo>
        </Header>

        <Main>
          <Cards>
            <Card>
              <CardTitle>System Information</CardTitle>
              <CardBody>
                <Stat $size="lg" $strong>Total Users: 5</Stat>
                <Stat $size="md" $strong>Total STS: 2</Stat>
                <Stat $size="sm">Total STS Managers: 2</Stat>
                <Stat $size="md" $strong>Total Landfill: 2</Stat>
                <Stat $size="sm">Total Landfill Managers: 2</Stat>
              </CardBody>
            </Card>
            <Card>
              <CardTitle>Vehicles Information</CardTitle>
              <CardBody>
                <Stat $size="lg" $strong>Total Vehicles: 3</Stat>
                <Stat $size="sm">OPEN_TRUCK: 0</Stat>
                <Stat $size="sm">DUMP_TRUCK: 1</Stat>
                <Stat $size="sm">COMPACTOR: 1</Stat>
                <Stat $size="sm">CONTAINER: 1</Stat>
                <Stat $size="lg" $strong>Total Capacity: 24 Tons</Stat>
              </CardBody>
            </Card>
            <Card>
              <CardTitle>Contractors Information</CardTitle>
              <CardBody>
                <Stat $size="lg" $strong>Total Contractors: 2</Stat>
                <Stat $size="md">Total Workforce: 3</Stat>
                <Stat $size="lg" $strong>Active Contracts: 2</Stat>
              </CardBody>
            </Card>
          </Cards>

          <MapSection>
            <SectionTitle>All Landfill and STS Location</SectionTitle>
            <MapFrame>
              <LocationMap />
              <MapFooter>
                <MapNote as="button" type="button">Keyboard shortcuts</MapNote>
                <MapNote>Map data ©2024</MapNote>
                <MapNote as="a" href="#">Terms</MapNote>
                <MapNote as="a" href="#">Report a map error</MapNote>
              </MapFooter>
            </MapFrame>
          </MapSection>

          <Stored>
            <StoredLabel>Total Waste Stored (this week):</StoredLabel>
            <StoredValue>7 Tons</StoredValue>
          </Stored>

          <Charts>
            <ChartColumn>
              <ChartTitle>LANDFILL HEATMAP OF LAST 7 DAYS</ChartTitle>
              <Heatmap />
            </ChartColumn>
            <ChartColumn>
              <Donut />
            </ChartColumn>
          </Charts>

          <Panel $tone={GREEN} $bg="#f5f5f5">
            <PanelTitle>Vechicles in STS:</PanelTitle>
            <Trip $action>
              <span>Arrived at: <strong>8:14:00 AM</strong></span>
              <Bar>|</Bar>
              <span>DHA-29-3023</span>
              <Bar>|</Bar>
              <span>Akkas Mia</span>
              <Bar>|</Bar>
              <span>01713238912</span>
              <LeftButton type="button">Left STS</LeftButton>
            </Trip>
          </Panel>
          <Panel $tone={RED} $bg="#fff">
            <PanelTitle>Vechicles Going to Landfill:</PanelTitle>
            <Empty>No vehicle to show</Empty>
          </Panel>
          <Panel $tone={RED} $bg="#f5f5f5">
            <PanelTitle>Vechicles in Landfill:</PanelTitle>
            <Empty>No vehicle to show</Empty>
          </Panel>
          <Panel $tone={GREEN} $bg="#f7fcf6">
            <PanelTitle>Vechicles coming from landfill:</PanelTitle>
            <Trip>
              <span>Left at: <strong>8:32:03 AM</strong></span>
              <Bar>|</Bar>
              <span>DHA-30-2130</span>
              <Bar>|</Bar>
              <span>Rahim Mia</span>
              <Bar $tight>|</Bar>
              <strong>01718234576</strong>
            </Trip>
          </Panel>
        </Main>
      </Content>
    </Page>
  );
}
